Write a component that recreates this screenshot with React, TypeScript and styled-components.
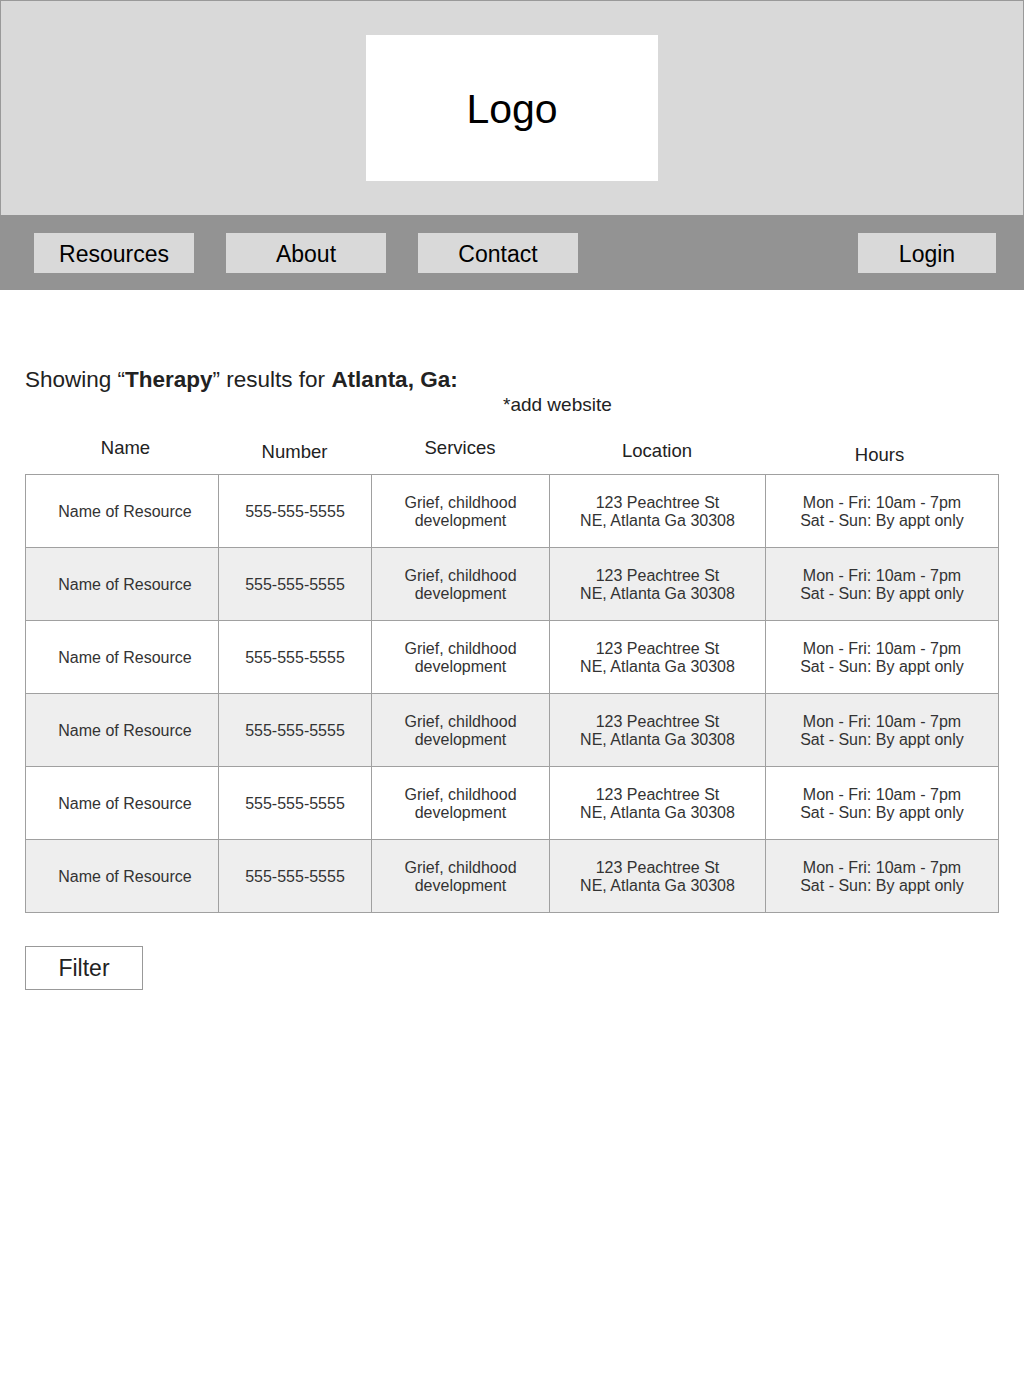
import React from "react";
import styled, { createGlobalStyle } from "styled-components";

const Global = createGlobalStyle`
  html, body { margin: 0; padding: 0; background: #fff; }
  body { font-family: "Liberation Sans", Arial, Helvetica, sans-serif; color: #222; }
  * { box-sizing: border-box; }
`;

const Page = styled.div`
  width: 1024px;
  min-height: 1374px;
  background: #fff;
`;

const Header = styled.header`
  height: 215px;
  background: #d9d9d9;
  border: 1px solid #999;
  border-bottom: none;
  display: flex;
  justify-content: center;
  padding-top: 34px;
`;

const LogoBox = styled.div`
  width: 292px;
  height: 146px;
  background: #fff;
  display: flex;
  align-items: center;
  justify-content: center;
  font-size: 41px;
  color: #000;
  padding-top: 2px;
`;

const NavBar = styled.nav`
  height: 75px;
  background: #939393;
  display: flex;
  align-items: flex-start;
  padding: 18px 28px 0 34px;
  gap: 32px;
`;

const NavButton = styled.div<{ $w?: number; $push?: boolean }>`
  width: ${(p) => p.$w ?? 160}px;
  height: 40px;
  background: #d9d9d9;
  display: flex;
  align-items: center;
  justify-content: center;
  font-size: 23px;
  color: #000;
  padding-top: 2px;
  margin-left: ${(p) => (p.$push ? "auto" : "0")};
`;

const Main = styled.main`
  padding: 78px 25px 0 25px;
`;

const Heading = styled.h1`
  margin: 0;
  font-size: 22.5px;
  line-height: 24px;
  font-weight: normal;
  color: #222;
  b { font-weight: bold; }
`;

const Note = styled.div`
  margin-left: 478px;
  margin-top: 2px;
  font-size: 19px;
  line-height: 22px;
  color: #222;
`;

const ColGrid = `
  display: grid;
  grid-template-columns: 193px 153px 178px 216px 233px;
`;

const HeadRow = styled.div`
  ${ColGrid}
  height: 58px;
  align-items: end;
  width: 973px;
`;

const HeadCell = styled.div<{ $pb: number; $dx: number }>`
  text-align: center;
  font-size: 18.5px;
  line-height: 20px;
  color: #222;
  padding-bottom: ${(p) => p.$pb}px;
  padding-left: ${(p) => Math.max(p.$dx, 0) * 2}px;
  padding-right: ${(p) => Math.max(-p.$dx, 0) * 2}px;
`;

const Table = styled.div`
  width: 974px;
  border-top: 1px solid #a0a0a0;
  border-left: 1px solid #a0a0a0;
`;

const Row = styled.div<{ $alt: boolean }>`
  ${ColGrid}
  height: 73px;
  background: ${(p) => (p.$alt ? "#eeeeee" : "#ffffff")};
`;

const Cell = styled.div<{ $dx?: number }>`
  border-right: 1px solid #a0a0a0;
  border-bottom: 1px solid #a0a0a0;
  display: flex;
  align-items: center;
  justify-content: center;
  text-align: center;
  font-size: 16px;
  line-height: 18px;
  color: #333;
  padding-top: 1px;
  padding-left: ${(p) => (p.$dx ?? 0) * 2}px;
`;

const FilterButton = styled.div`
  margin-top: 33px;
  width: 118px;
  height: 44px;
  border: 1px solid #999;
  display: flex;
  align-items: center;
  justify-content: center;
  font-size: 23px;
  color: #222;
`;

const heads = [
  { t: "Name", pb: 16, dx: 4 },
  { t: "Number", pb: 12, dx: 0 },
  { t: "Services", pb: 16, dx: 0 },
  { t: "Location", pb: 13, dx: 0 },
  { t: "Hours", pb: 9, dx: -2 },
];

export default function App() {
  const rows = Array.from({ length: 6 }, (_, i) => i);
  return (
    <Page>
      <Global />
      <Header>
        <LogoBox>Logo</LogoBox>
      </Header>
      <NavBar>
        <NavButton>Resources</NavButton>
        <NavButton>About</NavButton>
        <NavButton>Contact</NavButton>
        <NavButton $w={138} $push>
          Login
        </NavButton>
      </NavBar>
      <Main>
        <Heading>
          Showing “<b>Therapy</b>” results for <b>Atlanta, Ga:</b>
        </Heading>
        <Note>*add website</Note>
        <HeadRow>
          {heads.map((h) => (
            <HeadCell key={h.t} $pb={h.pb} $dx={h.dx}>
              {h.t}
            </HeadCell>
          ))}
        </HeadRow>
        <Table>
          {rows.map((i) => (
            <Row key={i} $alt={i % 2 === 1}>
              <Cell $dx={3}>Name of Resource</Cell>
              <Cell>555-555-5555</Cell>
              <Cell>
                Grief, childhood
                <br />
                development
              </Cell>
              <Cell>
                123 Peachtree St
                <br />
                NE, Atlanta Ga 30308
              </Cell>
              <Cell>
                Mon - Fri: 10am - 7pm
                <br />
                Sat - Sun: By appt only
              </Cell>
            </Row>
          ))}
        </Table>
        <FilterButton>Filter</FilterButton>
      </Main>
    </Page>
  );
}
